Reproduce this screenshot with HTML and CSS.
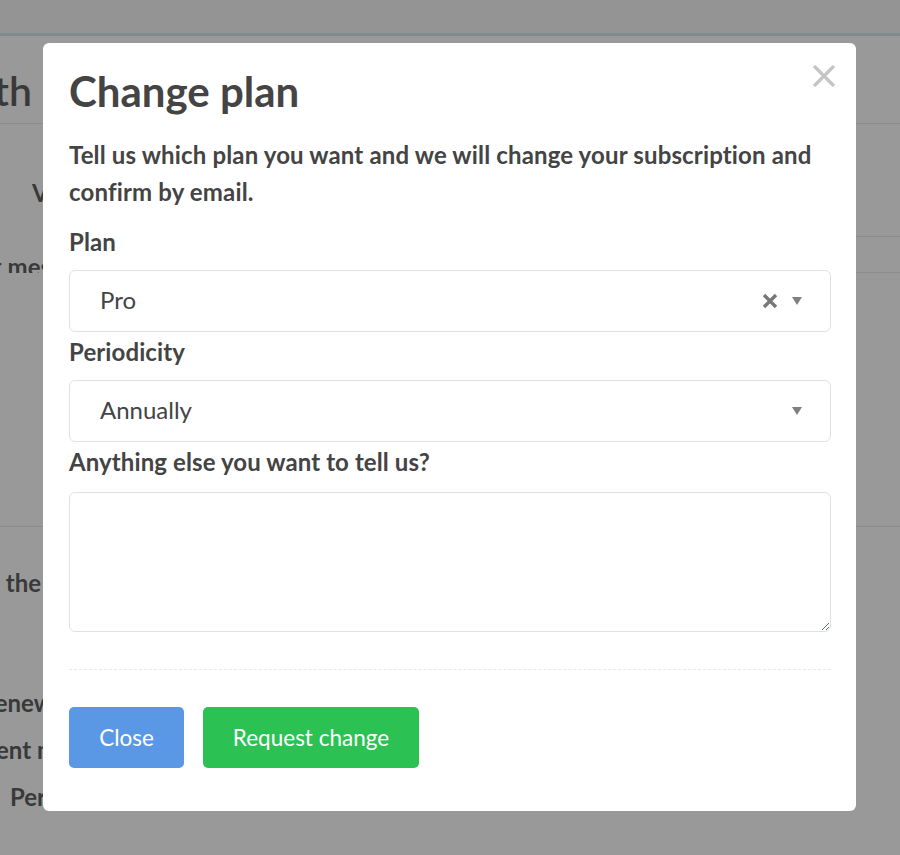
FILE: index.html
```html
<!DOCTYPE html>
<html lang="en">
<head>
<meta charset="utf-8">
<title>Change plan</title>
<link rel="stylesheet" href="styles.css">
</head>
<body>
<div class="page">
  <div class="topbar"></div>
  <div class="row row-a">
    <div class="l l-end"><span class="frag frag-big">th</span></div>
    <div class="m"></div>
    <div class="r"></div>
  </div>
  <div class="row row-b">
    <div class="l l-start"><span class="frag">Valid until</span></div>
    <div class="m"></div>
    <div class="r"></div>
  </div>
  <div class="row row-c">
    <div class="l l-end"><span class="frag f-mes">Last mes</span></div>
    <div class="m"></div>
    <div class="r"></div>
  </div>
  <div class="row row-d">
    <div class="l"></div>
    <div class="m"></div>
    <div class="r"></div>
  </div>
  <div class="row row-e">
    <div class="l l-stack">
      <span class="frag f-the">the</span>
      <span class="frag f-renew">Renew</span>
      <span class="frag f-ent">Payment m</span>
      <span class="frag f-per">Period</span>
    </div>
    <div class="m"></div>
    <div class="r"></div>
  </div>
</div>

<div class="modal">
  <button class="modal-close" aria-label="Close">
    <svg width="24" height="24" viewBox="0 0 24 24"><path d="M2 2 L22 22 M22 2 L2 22" stroke="#c5c5c5" stroke-width="3.2" stroke-linecap="butt" fill="none"/></svg>
  </button>
  <h1 class="modal-title">Change plan</h1>
  <p class="modal-desc">Tell us which plan you want and we will change your subscription and confirm by email.</p>

  <label class="field-label">Plan</label>
  <div class="select">
    <span class="select-value">Pro</span>
    <span class="select-icons">
      <svg class="clear-icon" width="16" height="16" viewBox="0 0 16 16"><path d="M2 2 L14 14 M14 2 L2 14" stroke="#777" stroke-width="3.4" fill="none"/></svg>
      <svg class="arrow-icon" width="10" height="8" viewBox="0 0 10 8"><path d="M0 0 H10 L5 8 Z" fill="#808080"/></svg>
    </span>
  </div>

  <label class="field-label">Periodicity</label>
  <div class="select">
    <span class="select-value">Annually</span>
    <span class="select-icons">
      <svg class="arrow-icon" width="10" height="8" viewBox="0 0 10 8"><path d="M0 0 H10 L5 8 Z" fill="#808080"/></svg>
    </span>
  </div>

  <label class="field-label">Anything else you want to tell us?</label>
  <textarea class="textarea"></textarea>

  <div class="modal-footer">
    <button class="btn btn-blue">Close</button>
    <button class="btn btn-green">Request change</button>
  </div>
</div>
</body>
</html>
```
FILE: styles.css
```css
html, body {
  margin: 0;
  padding: 0;
}
body {
  background: #999999;
  font-family: "Lato", "Noto Sans", sans-serif;
  color: #444;
  width: 900px;
  height: 855px;
  overflow: hidden;
  position: relative;
}

/* background page (dimmed) */
.page {
  width: 900px;
}
.topbar {
  height: 33px;
  background: #949494;
  border-bottom: 3px solid #7f8a8f;
}
.row {
  display: flex;
}
.l {
  width: 43px;
  flex: none;
  overflow: hidden;
  display: flex;
  white-space: nowrap;
  box-sizing: border-box;
}
.m { flex: 1; }
.r { width: 44px; flex: none; }

.l-end { justify-content: flex-end; }
.l-start { justify-content: flex-start; }

.frag {
  color: #393939;
  font-weight: 700;
  font-size: 24px;
  line-height: 28px;
  flex: none;
}
.frag-big {
  font-size: 41px;
  line-height: 48px;
  font-weight: 600;
}

.row-a { height: 87px; border-bottom: 1px solid #8d8d8d; }
.row-a .l { padding-top: 31px; padding-right: 11px; }

.row-b { height: 113px; }
.row-b .r { border-bottom: 1px solid #8d8d8d; }
.row-b .l { padding-top: 55px; padding-left: 32px; }

.row-c { height: 36px; }
.row-c .r { border-bottom: 1px solid #8d8d8d; }
.row-c .l { padding-top: 16px; }
.f-mes { margin-right: -8px; }

.row-d { height: 253px; border-bottom: 1px solid #8d8d8d; }

.row-e { height: 327px; }
.l-stack {
  flex-direction: column;
  align-items: flex-end;
}
.f-the { margin-top: 42px; margin-right: 2px; }
.f-renew { margin-top: 92px; margin-right: -10px; }
.f-ent { margin-top: 19px; margin-right: -14px; }
.f-per { margin-top: 19px; align-self: flex-start; margin-left: 10px; }

/* modal */
.modal {
  position: absolute;
  left: 43px;
  top: 43px;
  width: 813px;
  height: 768px;
  box-sizing: border-box;
  background: #fff;
  border-radius: 6px;
  padding: 24px 25px 0 26px;
}
.modal-close {
  position: absolute;
  right: 20px;
  top: 21px;
  background: none;
  border: 0;
  padding: 0;
  width: 24px;
  height: 24px;
  cursor: pointer;
}
.modal-close svg { display: block; }
.modal-title {
  margin: 0;
  font-size: 42px;
  line-height: 48px;
  font-weight: 700;
  color: #444;
}
.modal-desc {
  margin: 21px 0 12px;
  font-size: 24px;
  letter-spacing: 0.15px;
  line-height: 37px;
  font-weight: 700;
  color: #444;
}
.field-label {
  display: block;
  font-size: 24px;
  letter-spacing: 0.1px;
  line-height: 40px;
  font-weight: 700;
  color: #444;
  margin-bottom: 8px;
}
.select {
  height: 62px;
  box-sizing: border-box;
  border: 1px solid #dde3e5;
  border-radius: 6px;
  display: flex;
  align-items: center;
  padding: 0 28px 2px 30px;
}
.select-value {
  flex: 1;
  font-size: 24px;
  line-height: 28px;
  color: #444;
}
.select-icons {
  display: flex;
  align-items: center;
  gap: 14px;
  padding-top: 2px;
}
.select-icons svg { display: block; }
.textarea {
  display: block;
  width: 100%;
  height: 140px;
  box-sizing: border-box;
  border: 1px solid #dde3e5;
  border-radius: 6px;
  resize: vertical;
  font-family: inherit;
  font-size: 22px;
  margin: 10px 0 0;
}
.modal-footer {
  margin-top: 37px;
  border-top: 1px dashed #e6e9ea;
  padding-top: 37px;
  display: flex;
  gap: 19px;
}
.btn {
  height: 61px;
  border: 0;
  border-radius: 5px;
  color: #fff;
  font-family: inherit;
  font-size: 22.5px;
  padding: 0;
  cursor: pointer;
}
.btn-blue { background: #5a98e6; width: 115px; }
.btn-green { background: #2bc253; width: 216px; }
```
